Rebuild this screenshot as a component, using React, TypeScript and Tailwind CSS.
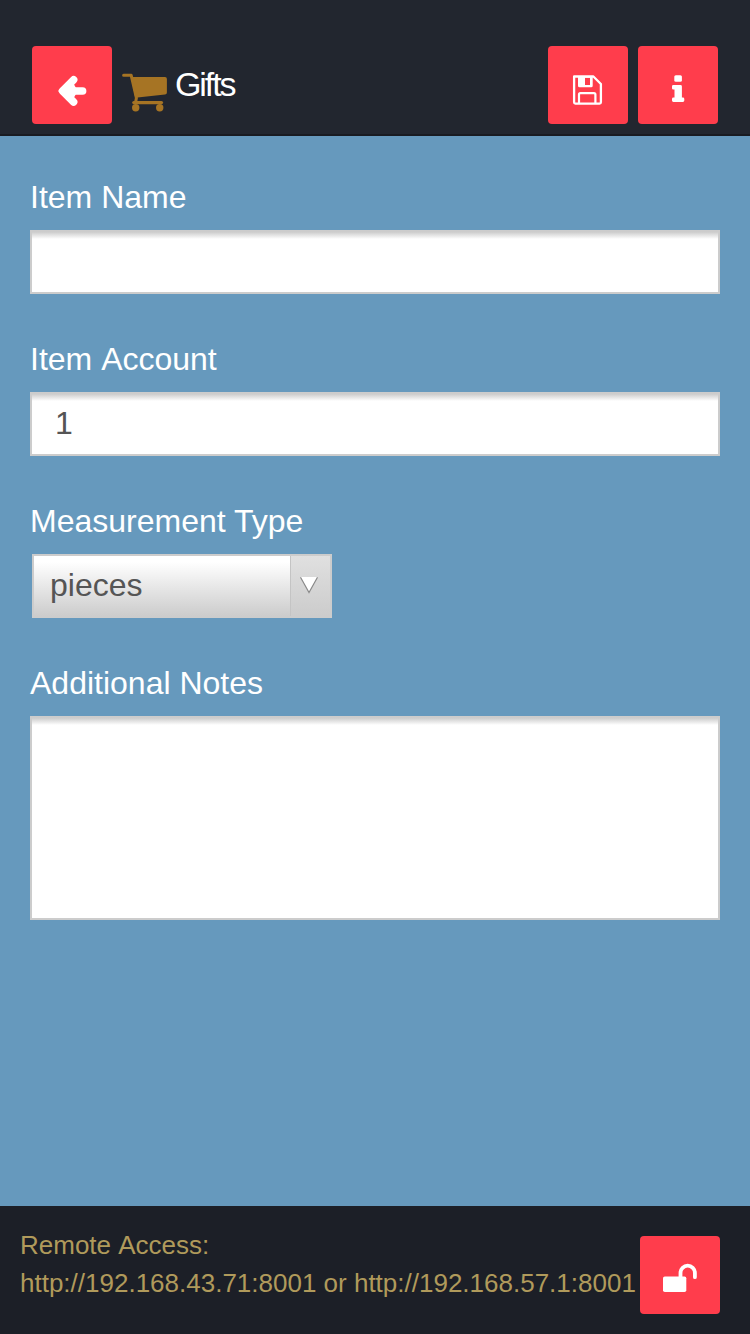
import type { ReactNode } from "react";

const inputStyle =
  "block w-full rounded-none border-2 border-[#ccc] bg-white bg-[linear-gradient(to_bottom,#ccc_0px,#fff_7px)] text-[32px] text-[#555] outline-none";

function IconButton({ label, children }: { label: string; children: ReactNode }) {
  return (
    <button
      type="button"
      aria-label={label}
      className="h-[78px] w-20 shrink-0 rounded-[4px] bg-[#ff3d4c]"
    >
      <svg viewBox="0 0 80 78" className="block h-[78px] w-20" fill="none">
        {children}
      </svg>
    </button>
  );
}

function Cart() {
  return (
    <svg viewBox="0 0 46 40" className="mt-[26px] ml-[10px] h-10 w-[46px] shrink-0" fill="#a67424">
      <path d="M1.6 3.3H9.2L14.4 26L13.6 30.3" fill="none" stroke="#a67424" strokeWidth="3" strokeLinecap="round" strokeLinejoin="round" />
      <path d="M9 5.1H43Q44.9 5.1 44.9 7V20.4Q44.9 22.2 43 22.4L13.2 25.8Z" />
      <path d="M11.8 30.6H39.5" fill="none" stroke="#a67424" strokeWidth="3.2" strokeLinecap="round" />
      <circle cx="13.7" cy="35.7" r="3.7" />
      <circle cx="37.7" cy="35.7" r="3.7" />
    </svg>
  );
}

function Field({ label, kerned = false, children }: { label: string; kerned?: boolean; children: ReactNode }) {
  return (
    <label className="mb-[46px] block">
      <span
        className={`mb-[14px] block h-[38px] text-[32px] leading-[38px] text-white ${kerned ? "[font-kerning:normal]" : ""}`}
      >
        {label}
      </span>
      {children}
    </label>
  );
}

export default function App() {
  return (
    <div className="flex h-[1334px] w-[750px] flex-col overflow-hidden bg-[#6699bd] font-['Liberation_Sans',Arial,sans-serif] [font-kerning:none]">
      <header className="flex h-[136px] shrink-0 items-start border-b-2 border-[#191b22] bg-[#22262f] px-8 pt-[46px]">
        <IconButton label="Back">
          <path d="M50.6 45H31M41.6 33.8L30.6 45L41.6 56" stroke="white" strokeWidth="7.6" strokeLinecap="round" strokeLinejoin="round" />
          <path d="M26.2 45L38.7 32.6L44 42H52V48H44L38.7 57.2Z" fill="white" />
        </IconButton>
        <Cart />
        <h1 className="mt-[19px] ml-[7px] text-[34px] leading-[39px] font-normal tracking-[-2.1px] text-white">Gifts</h1>
        <div className="ml-auto flex gap-[10px]">
          <IconButton label="Save">
            <path d="M26.1 30.5H45.4L52.9 38V56.3Q52.9 57.6 51.6 57.6H27.4Q26.1 57.6 26.1 56.3Z" stroke="white" strokeWidth="2.3" strokeLinejoin="round" />
            <path d="M30 30H44.7V39.8Q44.7 41.3 43.2 41.3H31.5Q30 41.3 30 39.8ZM37 31.7V39H42V31.7Z" fill="white" fillRule="evenodd" />
            <path d="M31 57V48.5Q31 47.1 32.4 47.1H46Q47.4 47.1 47.4 48.5V57" stroke="white" strokeWidth="2.2" />
          </IconButton>
          <IconButton label="Information">
            <rect x="36.3" y="29.2" width="7.6" height="6.5" rx="1.5" fill="white" />
            <path d="M35.3 39H42.5Q43.9 39 43.9 40.4V51.6H44.9Q46.3 51.6 46.3 53V54.6Q46.3 56 44.9 56H35.4Q34 56 34 54.6V53Q34 51.6 35.4 51.6H36.5V43.6H35.3Q34 43.6 34 42.2V40.4Q34 39 35.3 39Z" fill="white" />
          </IconButton>
        </div>
      </header>

      <main className="flex-1 px-[30px] pt-[42px]">
        <Field label="Item Name">
          <input type="text" className={`${inputStyle} h-16 px-[23px]`} />
        </Field>
        <Field label="Item Account">
          <input type="text" defaultValue="1" className={`${inputStyle} h-16 px-[23px] pb-[2px]`} />
        </Field>
        <Field label="Measurement Type" kerned>
          <span className="ml-[2px] flex h-16 w-[300px] border-2 border-[#ccc] bg-linear-to-b from-white from-10% to-[#ccc]">
            <span className="flex-1 pl-4 text-[32px] leading-[58px] text-[#555]">pieces</span>
            <span className="flex w-10 items-center justify-center border-l border-[#c4c4c4] bg-linear-to-b from-[#e0e0e0] to-[#ccc] pr-[3px] pb-[2px]">
              <svg viewBox="0 0 20 20" className="h-5 w-5">
                <path d="M1.2 2H18.8L10 18Z" fill="white" />
                <path d="M1.5 2.2L10 17.5L18.5 2.2" fill="none" stroke="#888" strokeWidth="1.2" />
              </svg>
            </span>
          </span>
        </Field>
        <Field label="Additional Notes">
          <textarea className={`${inputStyle} h-[204px] resize-none px-[23px] py-3`} />
        </Field>
      </main>

      <footer className="flex h-32 shrink-0 items-start bg-[#1c1f27] pr-[30px] pl-5">
        <p className="mt-5 flex-1 text-[26px] leading-[38px] whitespace-nowrap text-[#b09a5b]">
          Remote Access:
          <br />
          http://192.168.43.71:8001 or http://192.168.57.1:8001
        </p>
        <div className="mt-[30px]">
          <IconButton label="Unlock">
            <rect x="23" y="40.5" width="23.3" height="15.5" rx="1.8" fill="white" />
            <path d="M40.5 42V36.9A7.2 7.2 0 0 1 54.9 36.9V41.2" stroke="white" strokeWidth="3.8" strokeLinecap="round" />
          </IconButton>
        </div>
      </footer>
    </div>
  );
}
